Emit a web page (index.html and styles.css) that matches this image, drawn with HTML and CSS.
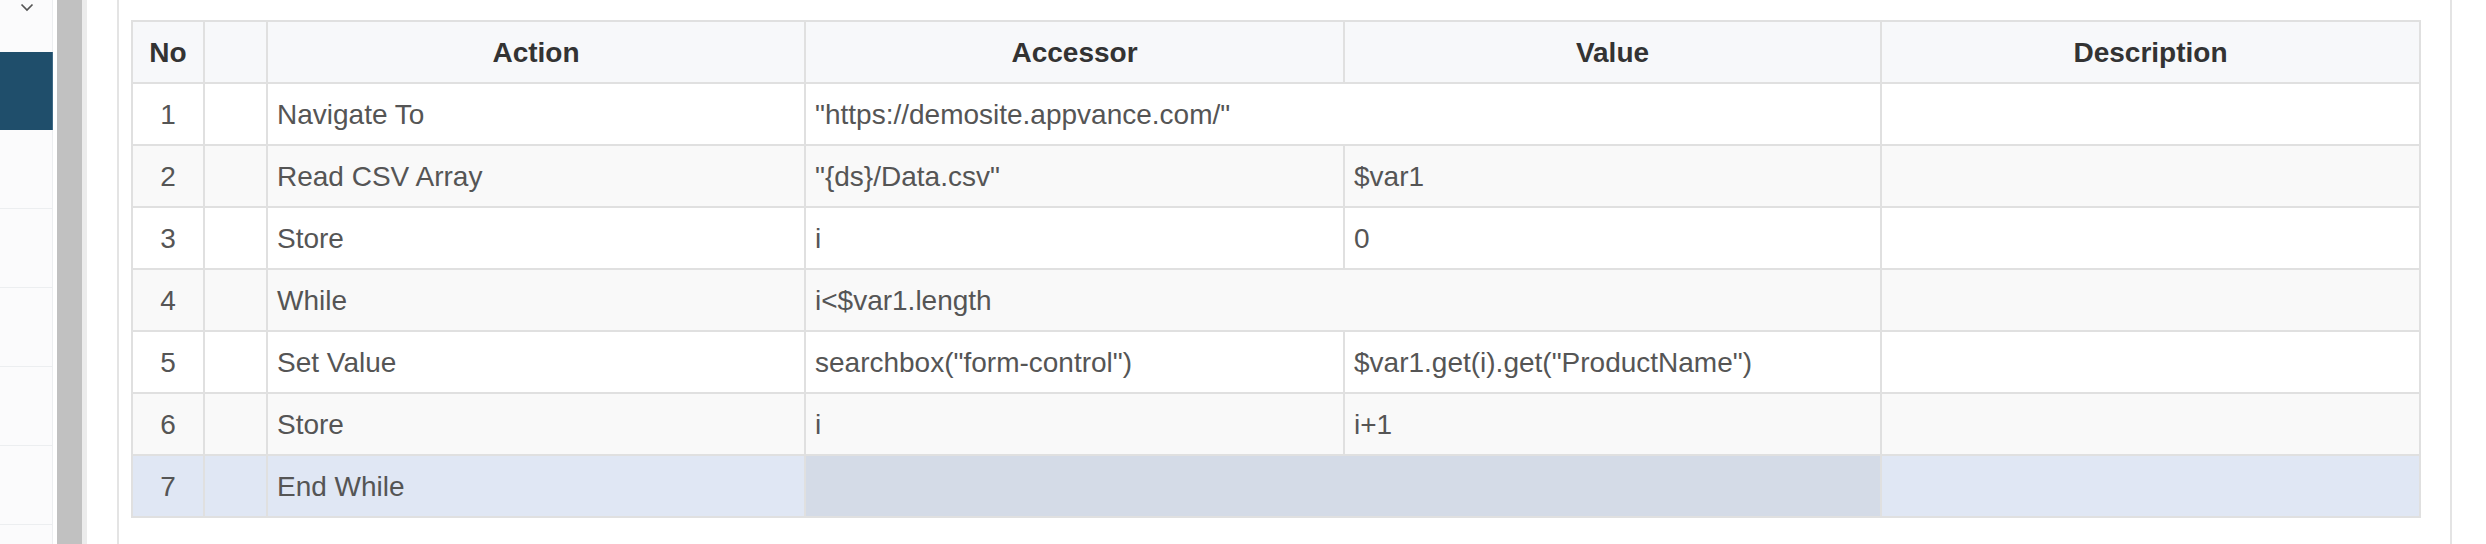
FILE: index.html
```html
<!DOCTYPE html>
<html>
<head>
<meta charset="utf-8">
<link rel="stylesheet" href="styles.css">
</head>
<body>
<div class="page">
  <aside class="sidebar">
    <div class="side-top">
      <svg class="chev" width="14" height="9" viewBox="0 0 14 9"><path d="M1.5 1.5 L7 7 L12.5 1.5" fill="none" stroke="#555" stroke-width="1.7"/></svg>
    </div>
    <div class="side-active"></div>
    <div class="side-row"></div>
    <div class="side-row"></div>
    <div class="side-row"></div>
    <div class="side-row"></div>
    <div class="side-row"></div>
  </aside>
  <div class="side-gap"></div>
  <div class="scrollbar"></div>
  <div class="scroll-edge"></div>
  <div class="spacer"></div>
  <main class="main">
    <table class="steps">
      <colgroup>
        <col class="c-no"><col class="c-blank"><col class="c-act"><col class="c-acc"><col class="c-val"><col class="c-desc">
      </colgroup>
      <thead>
        <tr><th>No</th><th></th><th>Action</th><th>Accessor</th><th>Value</th><th>Description</th></tr>
      </thead>
      <tbody>
        <tr><td class="num">1</td><td></td><td>Navigate To</td><td colspan="2">"https://demosite.appvance.com/"</td><td></td></tr>
        <tr class="alt"><td class="num">2</td><td></td><td>Read CSV Array</td><td>"{ds}/Data.csv"</td><td>$var1</td><td></td></tr>
        <tr><td class="num">3</td><td></td><td>Store</td><td>i</td><td>0</td><td></td></tr>
        <tr class="alt"><td class="num">4</td><td></td><td>While</td><td colspan="2">i&lt;$var1.length</td><td></td></tr>
        <tr><td class="num">5</td><td></td><td>Set Value</td><td>searchbox("form-control")</td><td>$var1.get(i).get("ProductName")</td><td></td></tr>
        <tr class="alt"><td class="num">6</td><td></td><td>Store</td><td>i</td><td>i+1</td><td></td></tr>
        <tr class="sel"><td class="num">7</td><td></td><td>End While</td><td colspan="2" class="sel-acc"></td><td></td></tr>
      </tbody>
    </table>
  </main>
  <div class="right-rest"></div>
</div>
</body>
</html>
```
FILE: styles.css
```css
html, body {
  margin: 0;
  padding: 0;
  background: #ffffff;
}
.page {
  display: flex;
  width: 2486px;
  height: 544px;
  overflow: hidden;
  font-family: "Liberation Sans", Arial, sans-serif;
}
.sidebar {
  width: 52px;
  flex: none;
  background: #fbfbfc;
  border-right: 1px solid #eceef0;
  display: flex;
  flex-direction: column;
}
.side-top {
  height: 52px;
  display: flex;
  justify-content: center;
  align-items: flex-start;
  padding-top: 3px;
  box-sizing: border-box;
}
.chev { display: block; margin-left: 1px; }
.side-active {
  height: 78px;
  background: #1f4e6b;
  border-right: 1px solid #3f6a86;
  margin-right: -1px;
}
.side-row {
  height: 78px;
  flex: none;
  border-bottom: 1px solid #eceef0;
}
.side-gap { width: 4px; flex: none; background: #fff; }
.scrollbar { width: 25px; flex: none; background: #c1c1c1; }
.scroll-edge { width: 5px; flex: none; background: #ececec; }
.spacer { width: 30px; flex: none; background: #fff; }
.main {
  width: 2335px;
  flex: none;
  border-left: 2px solid #e4e4e4;
  border-right: 2px solid #e4e4e4;
  padding: 20px 0 0 12px;
  box-sizing: border-box;
}
.right-rest { flex: 1; background: #fff; }

.steps {
  border-collapse: collapse;
  table-layout: fixed;
  width: 2288px;
  font-size: 28px;
  color: #555;
  border: 2px solid #e0e0e0;
}
.c-no { width: 72px; }
.c-blank { width: 63px; }
.c-act { width: 538px; }
.c-acc { width: 539px; }
.c-val { width: 537px; }
.c-desc { width: 539px; }

.steps th, .steps td {
  border: 2px solid #e0e0e0;
  height: 62px;
  padding: 1px 9px 0;
  box-sizing: border-box;
  white-space: nowrap;
  overflow: hidden;
}
.steps th {
  background: #f7f8fa;
  color: #333;
  font-weight: bold;
  text-align: center;
}
.steps td { background: #fff; text-align: left; }
.steps td.num { text-align: center; }
.steps tr.alt td { background: #f9f9f9; }
.steps tr.sel td { background: #e0e7f4; }
.steps tr.sel td.sel-acc { background: #d4dbe7; }
```
